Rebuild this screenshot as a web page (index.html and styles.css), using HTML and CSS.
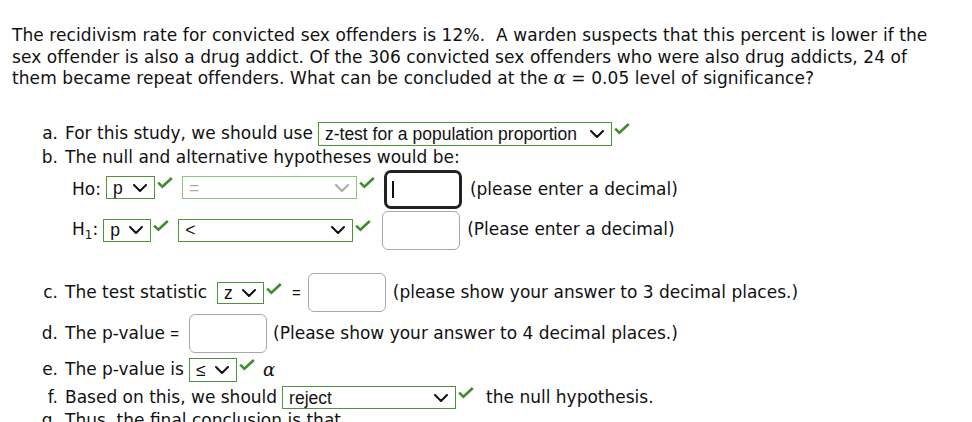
FILE: index.html
```html
<!DOCTYPE html>
<html>
<head>
<meta charset="utf-8">
<link rel="stylesheet" href="styles.css">
</head>
<body>
<div class="page">
  <p class="question">The recidivism rate for convicted sex offenders is 12%.&nbsp; A warden suspects that this percent is lower if the sex offender is also a drug addict. Of the 306 convicted sex offenders who were also drug addicts, 24 of them became repeat offenders. What can be concluded at the <span class="alpha q-alpha">α</span> = 0.05 level of significance?</p>

  <div class="items">
    <div class="row r-a">
      <span class="mk">a.</span>
      <span class="txt">For this study, we should use</span>
      <span class="pick ml5">
        <span class="sel h24 w-a">z-test for a population proportion<svg class="chev" width="14" height="8" viewBox="0 0 14 8"><path d="M1 1 L7 7 L13 1"/></svg></span>
        <svg class="chk" width="16" height="12" viewBox="0 0 16 12"><path d="M1.2 5.6 L5.4 9.8 L14.8 1"/></svg>
      </span>
    </div>

    <div class="row r-b">
      <span class="mk">b.</span>
      <span class="txt">The null and alternative hypotheses would be:</span>
    </div>

    <div class="row hyp r-ho">
      <span class="txt lab">Ho:</span>
      <span class="pick up2">
        <span class="sel h23 w-p">p<svg class="chev" width="14" height="8" viewBox="0 0 14 8"><path d="M1 1 L7 7 L13 1"/></svg></span>
        <svg class="chk" width="16" height="12" viewBox="0 0 16 12"><path d="M1.2 5.6 L5.4 9.8 L14.8 1"/></svg>
      </span>
      <span class="pick up2 ml9">
        <span class="sel h23 w-wide off">=<svg class="chev" width="14" height="8" viewBox="0 0 14 8"><path d="M1 1 L7 7 L13 1"/></svg></span>
        <svg class="chk" width="16" height="12" viewBox="0 0 16 12"><path d="M1.2 5.6 L5.4 9.8 L14.8 1"/></svg>
      </span>
      <span class="ans focus ml9"><span class="caret"></span></span>
      <span class="txt ml8">(please enter a decimal)</span>
    </div>

    <div class="row hyp r-h1">
      <span class="txt lab">H<sub class="sub">1</sub>:</span>
      <span class="pick">
        <span class="sel h23 w-p2">p<svg class="chev" width="14" height="8" viewBox="0 0 14 8"><path d="M1 1 L7 7 L13 1"/></svg></span>
        <svg class="chk" width="16" height="12" viewBox="0 0 16 12"><path d="M1.2 5.6 L5.4 9.8 L14.8 1"/></svg>
      </span>
      <span class="pick ml9">
        <span class="sel h23 w-wide">&lt;<svg class="chev" width="14" height="8" viewBox="0 0 14 8"><path d="M1 1 L7 7 L13 1"/></svg></span>
        <svg class="chk" width="16" height="12" viewBox="0 0 16 12"><path d="M1.2 5.6 L5.4 9.8 L14.8 1"/></svg>
      </span>
      <span class="ans ml11"></span>
      <span class="txt ml7">(Please enter a decimal)</span>
    </div>

    <div class="row r-c">
      <span class="mk">c.</span>
      <span class="txt">The test statistic</span>
      <span class="pick ml10">
        <span class="sel h22 w-z">z<svg class="chev" width="14" height="8" viewBox="0 0 14 8"><path d="M1 1 L7 7 L13 1"/></svg></span>
        <svg class="chk" width="16" height="12" viewBox="0 0 16 12"><path d="M1.2 5.6 L5.4 9.8 L14.8 1"/></svg>
      </span>
      <span class="eq ml10">=</span>
      <span class="ans ml7"></span>
      <span class="txt ml7">(please show your answer to 3 decimal places.)</span>
    </div>

    <div class="row r-d">
      <span class="mk">d.</span>
      <span class="txt">The p-value <span class="eqi">=</span></span>
      <span class="ans ml10"></span>
      <span class="txt ml6">(Please show your answer to 4 decimal places.)</span>
    </div>

    <div class="row r-e">
      <span class="mk">e.</span>
      <span class="txt">The p-value is</span>
      <span class="pick ml5">
        <span class="sel h24 w-le">≤<svg class="chev" width="14" height="8" viewBox="0 0 14 8"><path d="M1 1 L7 7 L13 1"/></svg></span>
        <svg class="chk" width="16" height="12" viewBox="0 0 16 12"><path d="M1.2 5.6 L5.4 9.8 L14.8 1"/></svg>
      </span>
      <span class="alpha ml8">α</span>
    </div>

    <div class="row r-f">
      <span class="mk">f.</span>
      <span class="txt">Based on this, we should</span>
      <span class="pick ml5">
        <span class="sel h23 w-rej">reject<svg class="chev" width="14" height="8" viewBox="0 0 14 8"><path d="M1 1 L7 7 L13 1"/></svg></span>
        <svg class="chk" width="16" height="12" viewBox="0 0 16 12"><path d="M1.2 5.6 L5.4 9.8 L14.8 1"/></svg>
      </span>
      <span class="txt ml12">the null hypothesis.</span>
    </div>

    <div class="row r-g">
      <span class="mk">g.</span>
      <span class="txt">Thus, the final conclusion is that</span>
    </div>
  </div>
</div>
</body>
</html>
```

FILE: styles.css
```css
html, body {
  margin: 0;
  padding: 0;
  background: #fff;
}

.page {
  padding: 25px 0 0 12px;
  font-family: "DejaVu Sans", sans-serif;
  font-size: 17px;
  line-height: 21.5px;
  color: #111;
}

.question {
  margin: 0;
  width: 928px;
  letter-spacing: 0.08px;
}

.alpha {
  font-family: "DejaVu Serif", serif;
  font-style: italic;
  font-size: 18px;
}

.q-alpha {
  line-height: 16px;
}

.items {
  margin-top: 32.5px;
  padding-left: 23px;
}

.row {
  display: flex;
  align-items: center;
  white-space: nowrap;
}

.r-a { height: 24px; }
.r-b { height: 23px; }
.r-ho { height: 41px; }
.r-h1 { height: 40px; }
.r-c { height: 41px; margin-top: 22px; }
.r-d { height: 41px; }
.r-e { height: 32px; }
.r-f { height: 23px; }
.r-g { height: 23px; }

.hyp { padding-left: 37px; }

.mk {
  width: 23px;
  text-align: right;
  margin-right: 7px;
  flex: none;
}

.lab { margin-right: 5px; }

.sub {
  font-size: 12px;
  line-height: 0;
  vertical-align: -4px;
}

.pick {
  display: inline-flex;
  align-items: flex-start;
  flex: none;
}

.up2 { margin-bottom: 4px; }

.sel {
  display: inline-flex;
  align-items: center;
  justify-content: space-between;
  box-sizing: border-box;
  border: 1px solid #4a9638;
  padding: 0 7px 0 6px;
  font-family: "Liberation Sans", Arial, sans-serif;
  font-size: 17.5px;
  line-height: 20px;
  color: #111;
  background: #fff;
}

.sel.off {
  border-color: #8cc47e;
  color: #aaa;
}

.h22 { height: 22px; }
.h23 { height: 23px; }
.h24 { height: 24px; }

.w-a { width: 294px; }
.w-p { width: 49px; }
.w-p2 { width: 48px; }
.w-wide { width: 175px; }
.w-z { width: 47px; }
.w-le { width: 48px; }
.w-rej { width: 174px; }

.chev {
  flex: none;
  margin-left: 6px;
}

.chev path {
  fill: none;
  stroke: currentColor;
  stroke-width: 2;
  stroke-linecap: round;
  stroke-linejoin: round;
}

.chk {
  flex: none;
  margin: 1px 0 0 2px;
}

.chk path {
  fill: none;
  stroke: #3d8c2e;
  stroke-width: 2.6;
}

.ans {
  display: inline-flex;
  align-items: center;
  box-sizing: border-box;
  width: 78px;
  height: 39px;
  border: 1px solid #a8a8a8;
  border-radius: 6px;
  background: #fff;
  flex: none;
}

.ans.focus {
  border: 3px solid #222;
  border-radius: 7px;
  padding-left: 5px;
}

.caret {
  display: block;
  width: 2px;
  height: 17px;
  background: #111;
}

.eq {
  font-family: "Liberation Sans", Arial, sans-serif;
  font-size: 15px;
}

.eqi {
  font-family: "Liberation Sans", Arial, sans-serif;
  font-size: 15px;
}

.ml5 { margin-left: 5px; }
.ml6 { margin-left: 6px; }
.ml7 { margin-left: 7px; }
.ml8 { margin-left: 8px; }
.ml9 { margin-left: 9px; }
.ml10 { margin-left: 10px; }
.ml11 { margin-left: 11px; }
.ml12 { margin-left: 12px; }
```
